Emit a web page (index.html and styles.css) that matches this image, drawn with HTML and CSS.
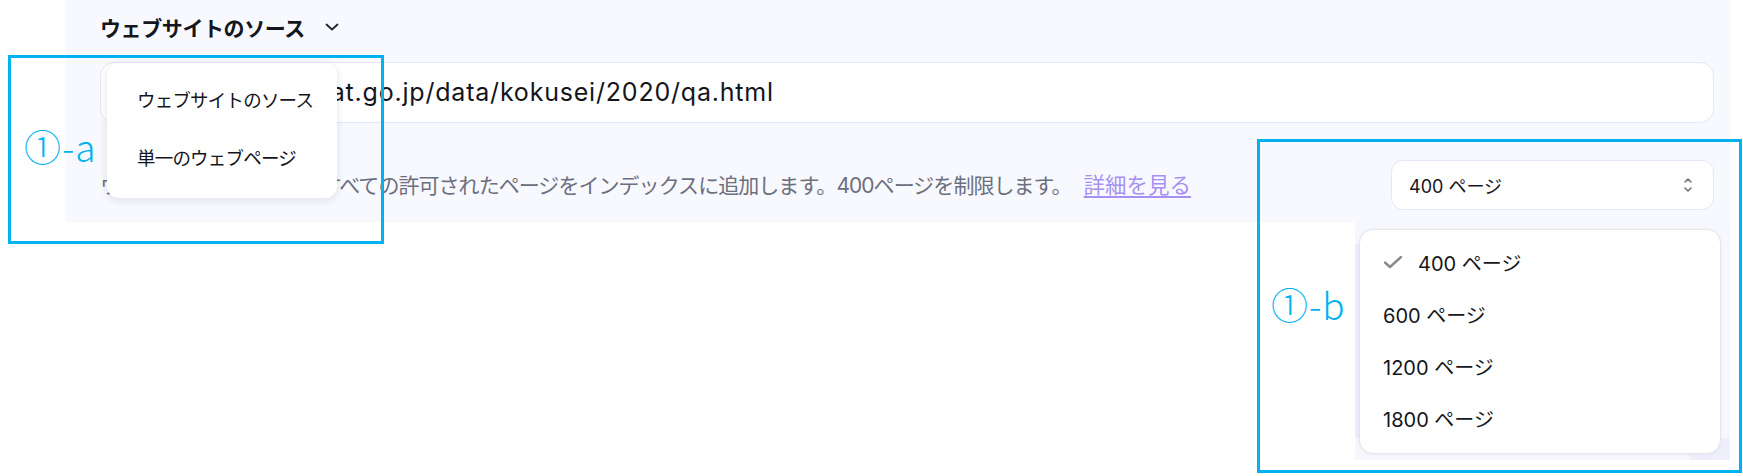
FILE: index.html
```html
<!DOCTYPE html>
<html lang="ja">
<head>
<meta charset="utf-8">
<title>ウェブサイトのソース</title>
<link rel="stylesheet" href="styles.css">
</head>
<body>
<div class="stage">
  <section class="panel">
    <div class="title-row">
      <span class="title">ウェブサイトのソース</span>
      <svg class="chev" width="14" height="8" viewBox="0 0 14 8"><path d="M1.5 1.5 L7 6.5 L12.5 1.5" fill="none" stroke="#1f2230" stroke-width="1.8" stroke-linecap="round" stroke-linejoin="round"/></svg>
    </div>
    <div class="url-input">https://www.stat.go.jp/data/kokusei/2020/qa.html</div>
    <div class="help-row">
      <p class="help">ウェブサイトから辿れるすべての許可されたページをインデックスに追加します。400ページを制限します。<a class="more" href="#">詳細を見る</a></p>
      <div class="select">
        <span class="select-value">400 ページ</span>
        <svg class="updown" width="10" height="16" viewBox="0 0 10 16"><path d="M2 5 L5 2 L8 5" fill="none" stroke="#6b7080" stroke-width="1.5" stroke-linecap="round" stroke-linejoin="round"/><path d="M2 11 L5 14 L8 11" fill="none" stroke="#6b7080" stroke-width="1.5" stroke-linecap="round" stroke-linejoin="round"/></svg>
      </div>
    </div>
  </section>

  <div class="menu-a">
    <div class="menu-a-item">ウェブサイトのソース</div>
    <div class="menu-a-item">単一のウェブページ</div>
  </div>

  <div class="ghost"></div>
  <div class="menu-b">
    <div class="menu-b-item selected">
      <svg class="check" width="20" height="14" viewBox="0 0 20 14"><path d="M2 7.5 L7 12 L18 2" fill="none" stroke="#8a8a8e" stroke-width="2.4" stroke-linecap="round" stroke-linejoin="round"/></svg>
      <span>400 ページ</span>
    </div>
    <div class="menu-b-item">600 ページ</div>
    <div class="menu-b-item">1200 ページ</div>
    <div class="menu-b-item">1800 ページ</div>
  </div>

  <div class="note note-a"><span class="note-label">①-a</span></div>
  <div class="note note-b"><span class="note-label">①-b</span></div>
</div>
</body>
</html>
```

FILE: styles.css
```css
* { box-sizing: border-box; }
html, body { margin: 0; padding: 0; background: #ffffff; }
body { width: 1743px; height: 476px; overflow: hidden; }
.stage { position: relative; width: 1743px; height: 476px; font-family: "Inter", "Noto Sans CJK JP", sans-serif; color: #1b1d26; }

.panel {
  margin-left: 65px;
  width: 1665px;
  height: 222px;
  background: #f8f9fe;
  padding: 12px 16px 0 35px;
  display: flex;
  flex-direction: column;
}
.title-row { display: flex; align-items: center; gap: 20px; height: 30px; }
.title { font-family: "Noto Sans CJK JP", sans-serif; font-weight: 700; font-size: 21px; line-height: 30px; letter-spacing: -0.4px; color: #15161c; }
.chev { display: block; }

.url-input {
  margin-top: 20px;
  height: 61px;
  background: #ffffff;
  border: 1px solid #e4e6fb;
  border-radius: 14px;
  padding: 0 20px 1px 46px;
  display: flex;
  align-items: center;
  font-size: 25px;
  letter-spacing: 0.8px;
  color: #14151b;
  white-space: nowrap;
  overflow: hidden;
}

.help-row { margin-top: 37px; display: flex; align-items: center; justify-content: space-between; height: 50px; }
.help { margin: 0; font-family: "Inter", "Noto Sans CJK JP", sans-serif; font-size: 21px; letter-spacing: -0.95px; line-height: 26px; color: #6c6f7e; white-space: nowrap; }
.more { color: #a690f2; font-size: 21.5px; letter-spacing: 0; text-decoration: underline; text-underline-offset: 3px; margin-left: 12px; }

.select {
  width: 323px;
  height: 50px;
  background: #ffffff;
  border: 1px solid #e6e6fb;
  border-radius: 12px;
  display: flex;
  align-items: center;
  justify-content: space-between;
  padding: 0 20px 0 17px;
}
.select-value { font-size: 18px; color: #15161c; }
.updown { display: block; }

.menu-a {
  position: absolute;
  left: 107px; top: 63px;
  width: 230px; height: 135px;
  background: #ffffff;
  border-radius: 12px;
  box-shadow: 0 2px 8px rgba(30, 35, 70, 0.12);
  padding: 7px 0 0 30px;
}
.menu-a-item { font-family: "Noto Sans CJK JP", sans-serif; font-size: 18.5px; line-height: 58px; height: 58px; color: #15161c; letter-spacing: -0.8px; }

.ghost {
  position: absolute; left: 1355px; top: 222px; width: 375px; height: 238px;
  background:
    linear-gradient(#ececfb, #ececfb) 0 22px / 4px 194px no-repeat,
    linear-gradient(#efeffc, #efeffc) right 0 bottom 0 / 41px 22px no-repeat,
    #f7f8fe;
}

.menu-b {
  position: absolute;
  left: 1359px; top: 229px;
  width: 362px; height: 225px;
  background: #ffffff;
  border: 1px solid #e4e5ee;
  border-radius: 14px;
  box-shadow: 0 1px 3px rgba(30, 35, 70, 0.06);
  padding: 6px 0 0 23px;
}
.menu-b-item { display: flex; align-items: center; height: 52px; font-size: 20px; color: #15161c; }
.menu-b-item.selected { gap: 15px; }
.check { display: block; }

.note { position: absolute; border: 3px solid #00b2f0; }
.note-a { left: 8px; top: 55px; width: 376px; height: 189px; }
.note-b { left: 1257px; top: 139px; width: 485px; height: 334px; }
.note-label { position: absolute; font-family: "Noto Sans CJK JP", sans-serif; font-weight: 300; font-size: 37px; line-height: 44px; color: #00b2f0; letter-spacing: 1px; }
.note-a .note-label { left: 13px; top: 66px; }
.note-b .note-label { left: 11px; top: 140px; }
```
